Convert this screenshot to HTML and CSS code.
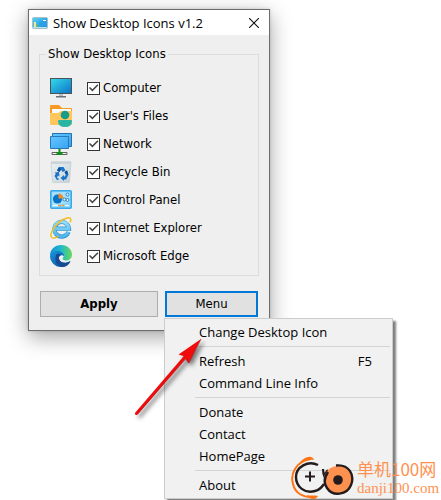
FILE: index.html
```html
<!DOCTYPE html>
<html lang="en">
<head>
<meta charset="utf-8">
<title>Show Desktop Icons v1.2</title>
<link rel="stylesheet" href="styles.css">
</head>
<body>
<main class="desktop">
  <section class="window">
    <header class="titlebar">
      <svg class="app-icon" viewBox="0 0 16 12">
        <defs>
          <linearGradient id="sky" x1="0" y1="0" x2="1" y2="1"><stop offset="0" stop-color="#56d4f4"/><stop offset="1" stop-color="#1789dc"/></linearGradient>
        </defs>
        <rect x=".5" y=".5" width="15" height="11" rx="1" fill="url(#sky)" stroke="#a9bfca"/>
        <path d="M7 5l8-3v7H8z" fill="#2d9fe6"/>
        <path d="M1 10h14v1H1z" fill="#bfe3ef"/>
        <path d="M2 5h2v5H2z" fill="#f6e7a0"/><path d="M4 7h2v3H4z" fill="#5bb58e"/><path d="M11 3h3v1h-3z" fill="#e9fbff"/>
      </svg>
      <h1 class="title">Show Desktop Icons v1.2</h1>
      <button class="close" type="button" aria-label="Close">
        <svg viewBox="0 0 10 10" width="10" height="10"><path d="M0 0l10 10M10 0L0 10" stroke="#111" stroke-width="1.1"/></svg>
      </button>
    </header>
    <form class="content">
      <fieldset class="group">
        <legend>Show Desktop Icons</legend>
        <div class="row">
          <svg class="icon" viewBox="0 0 22 22">
            <defs><linearGradient id="screen" x1="0" y1="0" x2="1" y2="1"><stop offset="0" stop-color="#35dcea"/><stop offset="1" stop-color="#0b72c8"/></linearGradient></defs>
            <rect x=".5" y="1.5" width="21" height="15" fill="url(#screen)" stroke="#4b5358"/>
            <path d="M9 17h4v2H9z" fill="#b8bdc0"/><path d="M6 19h10v1.500H6z" fill="#687078"/>
          </svg>
          <input type="checkbox" id="computer" checked><label for="computer">Computer</label>
        </div>
        <div class="row">
          <svg class="icon" viewBox="0 0 22 22">
            <path d="M0 1q0-1 1-1h8l3 3h9q1 0 1 1v8H0z" fill="#f79a20"/>
            <path d="M2 4h19v5H2z" fill="#f4fcff"/>
            <path d="M0 8h8l3-2h11v13q0 1-1 1H1q-1 0-1-1z" fill="#ffc65c"/>
            <circle cx="15" cy="10" r="4.300" fill="#159c8b"/>
            <path d="M8 16q0-1 1-1h12q1 0 1 1 0 6-7 6t-7-6z" fill="#2ab5a2"/>
          </svg>
          <input type="checkbox" id="files" checked><label for="files">User's Files</label>
        </div>
        <div class="row">
          <svg class="icon" viewBox="0 0 22 22">
            <defs><linearGradient id="net" x1="0" y1="0" x2="1" y2="1"><stop offset="0" stop-color="#62c7ff"/><stop offset="1" stop-color="#3aa2f2"/></linearGradient></defs>
            <path d="M2.500.500h19v13h-19z" fill="url(#net)" stroke="#2371ad"/>
            <path d="M.5 3.500h18v12H.500z" fill="url(#net)" stroke="#287ab8"/>
            <path d="M2 19.500h15v2H2z" fill="#eee" stroke="#555" stroke-width=".9"/>
            <path d="M8.500 16h2v3h2v3h-6v-3h2z" fill="#168c1d"/>
          </svg>
          <input type="checkbox" id="network" checked><label for="network">Network</label>
        </div>
        <div class="row">
          <svg class="icon" viewBox="0 0 22 22">
            <defs><linearGradient id="bin" x1="0" y1="0" x2="1" y2="1"><stop offset="0" stop-color="#edf3f6"/><stop offset="1" stop-color="#c3d0d6"/></linearGradient></defs>
            <path d="M1 1h20l-1.500 19.500q0 1-1 1h-15q-1 0-1-1z" fill="url(#bin)" stroke="#c0cbd0" stroke-width=".7"/>
            <path d="M1 .5h20V3H1z" fill="#cbd5d9"/>
            <g fill="#1b73ca">
              <path d="M9 6h4.500l2 3.500L12.500 11 11 8.500 9.500 11 7 9.500z"/>
              <path d="M4.500 11.500L9 11l.5 4.500-1.500-1-1 2 1.500 1v1.500H7L4.500 15l1.300-2.500z"/>
              <path d="M14.500 11l2.500-1.500 1.500 4-2.500 5H14v1.500L10.500 17l3.500-3v1.500h1l.8-2z"/>
            </g>
            <path d="M9 6l2 2.500L9.500 11 7 9.500zM14.500 11l2.500-1.500 1 3-2 1z" fill="#0e5199"/>
          </svg>
          <input type="checkbox" id="bin-box" checked><label for="bin-box">Recycle Bin</label>
        </div>
        <div class="row">
          <svg class="icon" viewBox="0 0 22 22">
            <rect x=".75" y="1.750" width="20.500" height="17.500" rx="1" fill="#83d3fa" stroke="#38a9ea" stroke-width="1.500"/>
            <path d="M2 3h18v10L2 18z" fill="#c5edff" opacity=".5"/>
            <circle cx="7.500" cy="10" r="4.600" fill="#0874c9"/>
            <path d="M8.500 9.500v-5a5 5 0 0 1 5 5z" fill="#f28b22"/>
            <path d="M3 16.500h5M15 16.500h4" stroke="#e3f8ff" stroke-width="1.500"/>
            <path d="M8 16.500h3M12 16.500h2" stroke="#e99a45" stroke-width="1.300"/>
            <g fill="#e8fbff" stroke="#1477c5" stroke-width=".9"><circle cx="14.500" cy="10.500" r="1.500"/><circle cx="17.500" cy="5.500" r="1.500"/><circle cx="17.500" cy="11" r="1.500"/></g>
          </svg>
          <input type="checkbox" id="panel" checked><label for="panel">Control Panel</label>
        </div>
        <div class="row">
          <svg class="icon" viewBox="0 0 22 22">
            <defs><linearGradient id="ie" x1="0" y1="0" x2="0" y2="1"><stop offset="0" stop-color="#93def9"/><stop offset="1" stop-color="#4db5ec"/></linearGradient></defs>
            <path d="M18.500 15A7.300 7.300 0 1 1 19 11.700H6" fill="none" stroke="#2e8fcc" stroke-width="4.200"/>
            <path d="M18.200 15A7.300 7.300 0 1 1 18.800 11.700H6" fill="none" stroke="url(#ie)" stroke-width="3"/>
            <path d="M2.500 21C-3 19 6 4 17 1c4-1 4.500 1.500 3 4.500" fill="none" stroke="#f5bd22" stroke-width="1.500"/>
            <path d="M2.500 21c2 .6 4-.6 6-2" fill="none" stroke="#f3b51b" stroke-width="1.200"/>
          </svg>
          <input type="checkbox" id="ie-box" checked><label for="ie-box">Internet Explorer</label>
        </div>
        <div class="row">
          <svg class="icon" viewBox="0 0 22 22">
            <defs>
              <linearGradient id="edge-top" x1="0" y1="0" x2="1" y2="0"><stop offset="0" stop-color="#1690d5"/><stop offset=".5" stop-color="#20b9c9"/><stop offset="1" stop-color="#69d957"/></linearGradient>
              <linearGradient id="edge-low" x1="0" y1="0" x2="1" y2="1"><stop offset="0" stop-color="#1697dc"/><stop offset="1" stop-color="#0d4698"/></linearGradient>
            </defs>
            <path d="M0 11C0 4 5 0 11 0c7 0 11 5 11 9.500 0 4-3 6-6 6-2 0-4-1-3-2.500 2-3-1-6-5-6-5 0-7 3-8 4z" fill="url(#edge-top)"/>
            <path d="M0 11c1-4 4-5.500 8-5 4 .4 6.500 3 6 5-2-2-6 0-5 3 1 4 7 5 11.500 2C18 20.500 14.500 22 11 22 5 22 0 17 0 11z" fill="url(#edge-low)"/>
            <path d="M6 10c-2 6 1 11 6 12 4 0 7-2 8.500-6-5 3-10.500 2-11.500-2-.6-2 .5-3.500 2-4.200C10 8.500 7 8 6 10z" fill="#164b91"/>
          </svg>
          <input type="checkbox" id="edge" checked><label for="edge">Microsoft Edge</label>
        </div>
      </fieldset>
      <div class="actions">
        <button class="button apply" type="button">Apply</button>
        <div class="menu-anchor">
          <button class="button menu-button" type="button" aria-haspopup="menu" aria-expanded="true">Menu</button>
          <div class="menu" role="menu">
            <button type="button" role="menuitem">Change Desktop Icon</button>
            <hr>
            <button type="button" role="menuitem">Refresh<kbd>F5</kbd></button>
            <button type="button" role="menuitem">Command Line Info</button>
            <hr>
            <button type="button" role="menuitem">Donate</button>
            <button type="button" role="menuitem">Contact</button>
            <button type="button" role="menuitem">HomePage</button>
            <hr>
            <button type="button" role="menuitem">About</button>
          </div>
        </div>
      </div>
    </form>
  </section>
  <svg class="arrow" viewBox="0 0 72 82">
    <path d="M3.500 77.500L52 21" stroke="#f00c0c" stroke-width="3" stroke-linecap="round"/>
    <path d="M68 3L45.500 18.500l5 1.500 5 7z" fill="#f00c0c"/>
    <path d="M5 77.500L53 22.500l3 4.500L68 3" fill="none" stroke="#a51313" stroke-width=".6"/>
  </svg>
  <aside class="watermark">
    <svg class="logo" viewBox="0 0 64 44">
      <path d="M20 3C5 5-1 18 2 28c2 9 10 14 21 13" fill="none" stroke="#ff7414" stroke-width="2"/>
      <path d="M9 6c4-4 9-7 13-4l1 2c-5-1-9 0-13 3zM15 39c4 1 8 0 12 1-2 4-7 4-12-1z" fill="#ff7414"/>
      <path d="M27 9C17 4 5 11 5 21s9 17 19 14c4-1 7-4 9-7" fill="none" stroke="#241c1c" stroke-width="2.400"/>
      <path d="M32 13q0 5 2 9M37 14l-3 4" fill="none" stroke="#241c1c" stroke-width="2.200"/>
      <path d="M19 15.500v10M14 20.500h10" stroke="#241c1c" stroke-width="2"/>
      <circle cx="47" cy="24" r="14" fill="#ff9150"/>
      <path d="M45 9.500C58 8 64 19 60 29c-4 10-18 12-24 3-3-4-3-10 1-16" fill="none" stroke="#241c1c" stroke-width="2.400"/>
      <circle cx="47" cy="24" r="4.800" fill="#241c1c"/>
    </svg>
    <div class="site"><span class="name">单机100网</span><span class="domain">danji100.com</span></div>
  </aside>
</main>
</body>
</html>
```
FILE: styles.css
```css
* { box-sizing: border-box; }
body {
  margin: 0;
  background: #fff;
  color: #000;
  font: 13px/16px "DejaVu Sans Condensed", "DejaVu Sans", sans-serif;
}
button { font: inherit; color: inherit; border-radius: 0; }
.desktop {
  position: relative;
  min-height: 100vh;
  padding: 9px 171px 0 28px;
  overflow: hidden;
}
.window {
  border: 1px solid #6c6c6c;
  background: #efefef;
  box-shadow: 0 6px 20px rgba(0, 0, 0, .36), 0 0 3px rgba(0, 0, 0, .15);
}
.titlebar {
  display: flex;
  align-items: center;
  height: 25px;
  padding: 0 10px 0 3px;
  background: #fff;
}
.app-icon { width: 16px; height: 12px; margin-right: 5px; }
.title { flex: 1; margin: 0; font: 13px/20px "Open Sans", sans-serif; white-space: nowrap; }
.close { display: flex; padding: 0; border: 0; background: none; }
.content { padding: 11px 10px 13px; }
.group { margin: 0; padding: 12px 10px 5px; border: 1px solid #dcdcdc; }
.group legend { margin-left: -4px; padding: 0 2px; }
.row { display: flex; align-items: center; height: 28px; }
.icon { width: 22px; height: 22px; margin-right: 15px; }
.row input {
  appearance: none;
  width: 13px;
  height: 13px;
  margin: 0 3px 0 0;
  border: 1px solid #333;
  background: #fff;
  display: grid;
}
.row input:checked::before {
  content: "";
  width: 11px;
  height: 11px;
  background: #444;
  clip-path: polygon(9% 50%, 18% 41%, 40% 62%, 86% 16%, 95% 26%, 40% 82%);
}
.actions {
  display: grid;
  grid-template-columns: 118fr 93fr;
  gap: 7px;
  padding: 15px 1px 0;
}
.button { height: 26px; padding: 0; border: 1px solid #adadad; background: #e1e1e1; }
.apply { font-weight: bold; }
.menu-anchor { position: relative; }
.menu-button { width: 100%; border: 2px solid #0078d7; }
.menu {
  position: absolute;
  top: 27px;
  left: -1px;
  width: 229px;
  padding: 2px;
  border: 1px solid #ccc;
  background: #f1f1f1;
  box-shadow: 3px 3px 2px rgba(0, 0, 0, .5);
}
.menu button {
  display: flex;
  justify-content: space-between;
  align-items: center;
  width: 100%;
  height: 22px;
  padding: 0 18px 0 32px;
  border: 0;
  background: none;
  font: 13px/20px "Open Sans", sans-serif;
}
.menu kbd { font: inherit; }
.menu hr { height: 1px; margin: 3px 0 3px 28px; border: 0; background: #d3d3d3; }
.arrow {
  position: absolute;
  top: 336px;
  left: 133px;
  width: 72px;
  height: 82px;
  filter: drop-shadow(3px 3px 2px rgba(0, 0, 0, .5));
}
.watermark {
  position: absolute;
  right: 2px;
  bottom: 0;
  display: flex;
  align-items: center;
  gap: 2px;
  color: #ff9150;
}
.logo { width: 64px; height: 44px; }
.site { display: grid; width: 82px; white-space: nowrap; }
.name { font: 17px/20px "Noto Sans CJK SC", sans-serif; }
.domain { font: 15px/18px "Liberation Serif", serif; }
```
